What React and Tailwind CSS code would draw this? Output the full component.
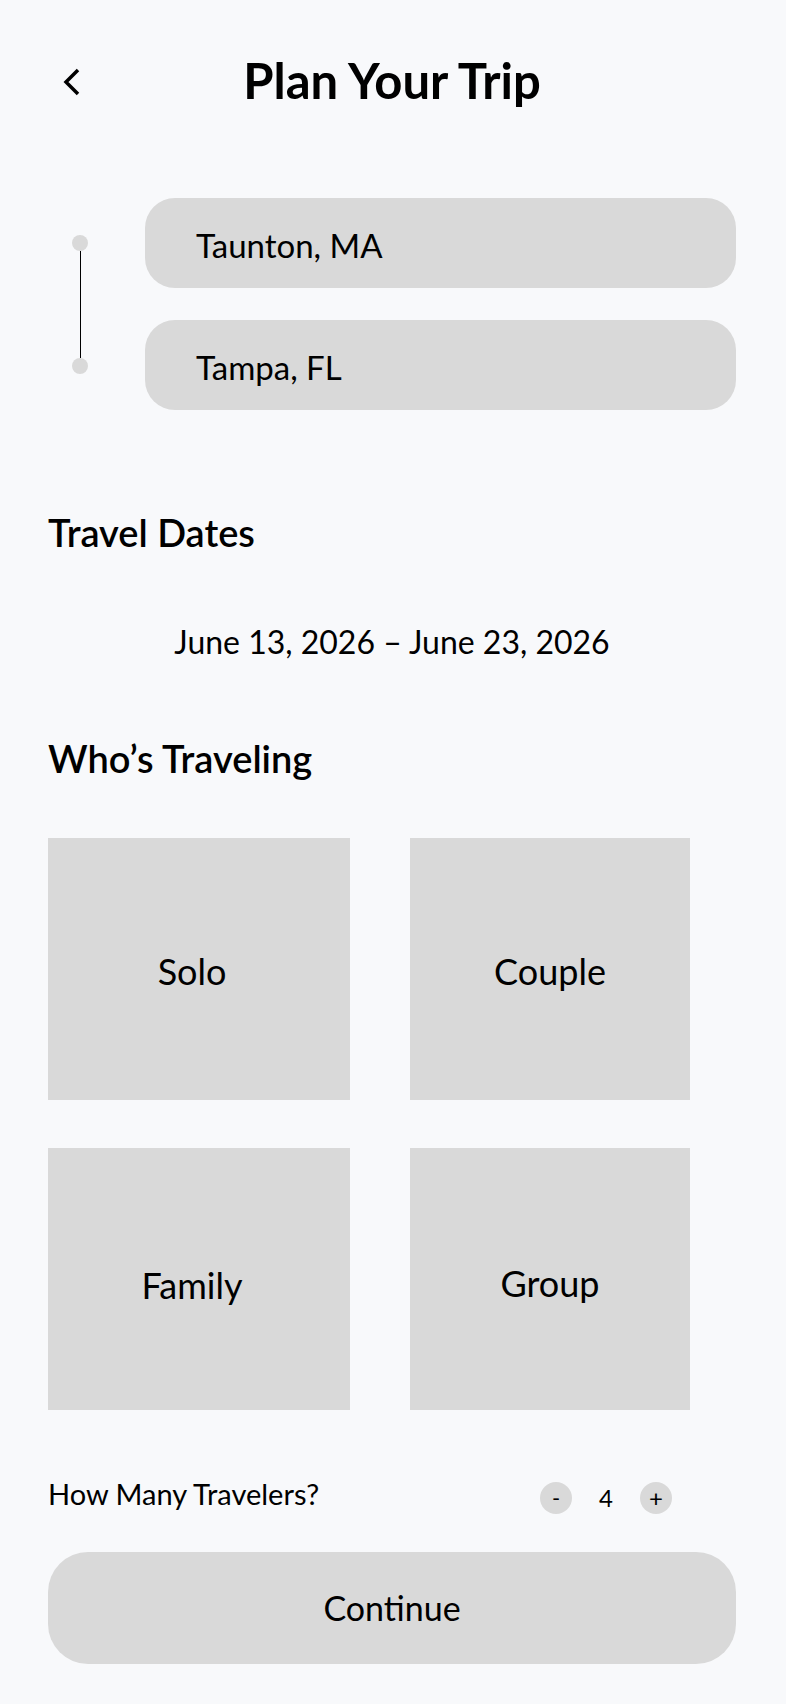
import React from 'react';

const font = { fontFamily: 'Lato, "Liberation Sans", sans-serif' };

// label offsets follow the mockup, where the text isn't quite centred
const travelerTypes = [
  { label: 'Solo', pad: 'pt-[4px] pr-[14px]' },
  { label: 'Couple', pad: 'pt-[4px]' },
  { label: 'Family', pad: 'pt-[13px] pr-[14px]' },
  { label: 'Group', pad: 'pt-[9px]' },
];

function BackIcon() {
  return (
    <svg width="24" height="32" viewBox="0 0 24 32" fill="none" className="ml-[12px] mt-[4px]">
      <path d="M18 4 L6 16 L18 28" stroke="#000" strokeWidth="3.5" />
    </svg>
  );
}

function RouteInput({ value }) {
  return (
    <div className="flex h-[90px] items-center rounded-[30px] bg-[#d9d9d9] pl-[51px] pt-[6px] text-[33px] leading-[1.2] text-black">
      {value}
    </div>
  );
}

export default function App() {
  const [count, setCount] = React.useState(4);

  return (
    <div className="min-h-[1704px] w-full bg-[#f8f9fb] pl-[48px] pr-[50px] pt-[51px] text-black" style={font}>
      {/* header */}
      <div className="grid grid-cols-[1fr_auto_1fr] items-center">
        <div>
          <BackIcon />
        </div>
        <h1 className="text-[49px] font-bold leading-[1.2]">Plan Your Trip</h1>
        <div />
      </div>

      {/* route */}
      <div className="mt-[88px] flex">
        <div className="flex w-[64px] flex-col items-center pt-[37px] pb-[36px]">
          <div className="h-[16px] w-[16px] rounded-full bg-[#d9d9d9]" />
          <div className="w-px flex-1 bg-black" />
          <div className="h-[16px] w-[16px] rounded-full bg-[#d9d9d9]" />
        </div>
        <div className="ml-[33px] flex flex-1 flex-col gap-[32px]">
          <RouteInput value="Taunton, MA" />
          <RouteInput value="Tampa, FL" />
        </div>
      </div>

      <h2 className="mt-[100px] text-[38px] font-semibold leading-[1.2]">Travel Dates</h2>
      <div className="mt-[68px] text-center text-[32px] leading-[1.2]">June 13, 2026 – June 23, 2026</div>

      <h2 className="mt-[74px] text-[38px] font-semibold leading-[1.2]">Who’s Traveling</h2>
      <div className="mt-[57px] grid grid-cols-[302px_280px] gap-x-[60px] gap-y-[48px]">
        {travelerTypes.map((t) => (
          <button
            key={t.label}
            className={`flex h-[262px] items-center justify-center bg-[#d9d9d9] text-[36px] leading-[1.2] ${t.pad}`}
          >
            {t.label}
          </button>
        ))}
      </div>

      {/* traveler count */}
      <div className="mt-[67px] flex items-start justify-between">
        <span className="text-[29px] leading-[1.2]">How Many Travelers?</span>
        <div className="mr-[64px] flex items-center pt-[5px]">
          <button
            onClick={() => setCount(Math.max(1, count - 1))}
            className="flex h-[32px] w-[32px] items-center justify-center rounded-full bg-[#d9d9d9] text-[22px] leading-none"
          >
            -
          </button>
          <span className="w-[68px] text-center text-[24px] leading-none">{count}</span>
          <button
            onClick={() => setCount(count + 1)}
            className="flex h-[32px] w-[32px] items-center justify-center rounded-full bg-[#d9d9d9] text-[24px] leading-none"
          >
            +
          </button>
        </div>
      </div>

      <button className="mt-[38px] flex h-[112px] w-full items-center justify-center rounded-[40px] bg-[#d9d9d9] text-[34px] leading-[1.2]">
        Continue
      </button>
    </div>
  );
}
